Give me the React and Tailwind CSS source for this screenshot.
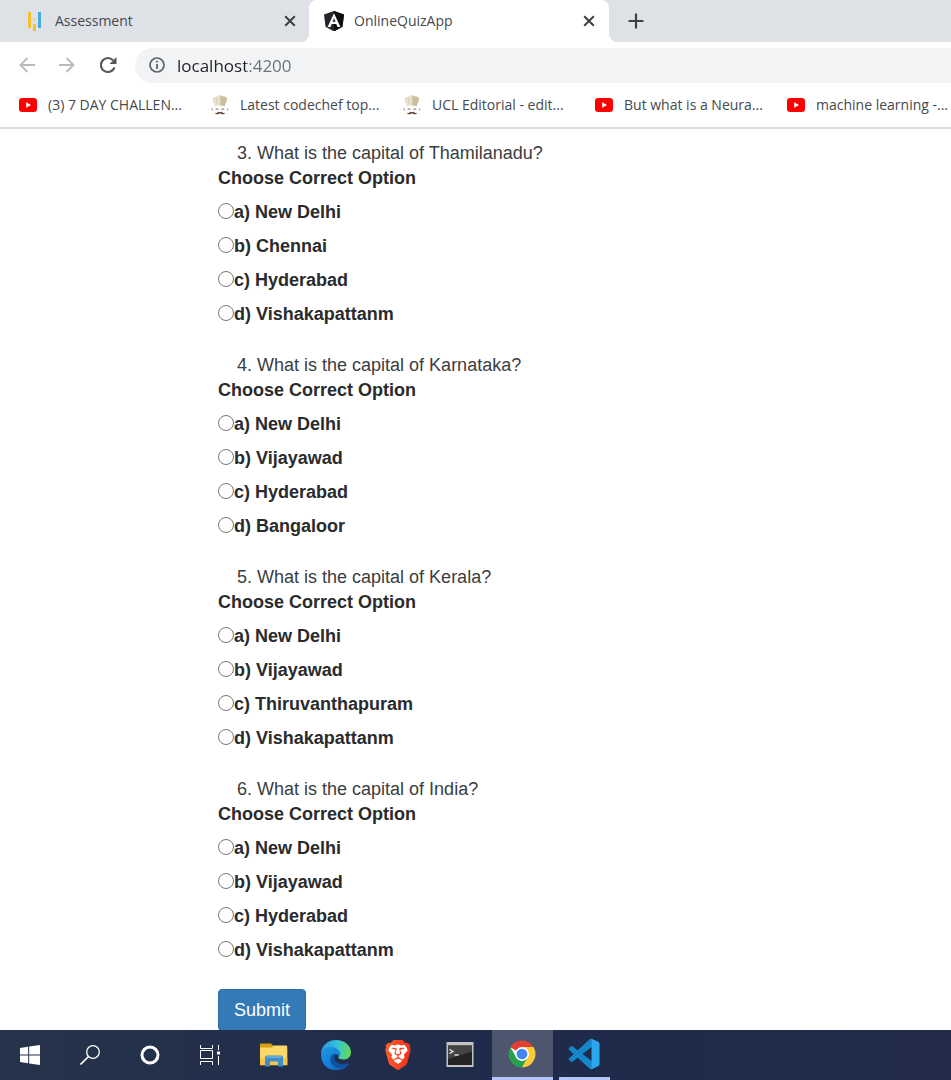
import React from "react";
import { SiBrave } from "react-icons/si";

const questions = [
  { n: 3, text: "What is the capital of Thamilanadu?", options: ["New Delhi", "Chennai", "Hyderabad", "Vishakapattanm"] },
  { n: 4, text: "What is the capital of Karnataka?", options: ["New Delhi", "Vijayawad", "Hyderabad", "Bangaloor"] },
  { n: 5, text: "What is the capital of Kerala?", options: ["New Delhi", "Vijayawad", "Thiruvanthapuram", "Vishakapattanm"] },
  { n: 6, text: "What is the capital of India?", options: ["New Delhi", "Vijayawad", "Hyderabad", "Vishakapattanm"] },
];

const bookmarks = [
  { icon: "youtube", label: "(3) 7 DAY CHALLEN..." },
  { icon: "chef", label: "Latest codechef top..." },
  { icon: "chef", label: "UCL Editorial - edit..." },
  { icon: "youtube", label: "But what is a Neura..." },
  { icon: "youtube", label: "machine learning -..." },
];

const YouTube = () => (
  <svg className="h-5 w-5 shrink-0" viewBox="0 0 20 20">
    <rect x="1" y="3" width="18" height="14" rx="3.2" fill="#f00" />
    <path d="M8.200 7.200v5.600l4.800-2.800z" fill="#fff" />
  </svg>
);

const Chef = () => (
  <svg className="h-5 w-5 shrink-0" viewBox="0 0 20 20" fill="none">
    <path d="M5 11.500C4 8 1.700 5.500 2.500 3.500 3.200 1.700 5.200 2 6 1.800 7.500.2 11 .1 12.800 1.300c2 0 4 .7 4.300 2.200.4 2.500-1.900 4.500-2.300 8-2.800-1.200-7-1.200-9.800 0z" fill="#e9e1d3" />
    <path d="M10 .4c2 0 2.600.6 3 1 2.300 0 4 .7 4.100 2.300.2 2.300-2.100 4.600-2.400 7.600-1.300-.5-2.700-.8-4.200-.8z" fill="#cdbf9f" />
    <path d="M6 3l1.600 7M13.500 3l-1.400 7" stroke="#c9bda4" strokeWidth=".6" />
    <path d="M2.800 13l-1.100 1.300 1.100 1.400M17.200 13l1.100 1.300-1.100 1.400" stroke="#9b8f86" strokeWidth=".9" />
    <path d="M5.700 14.600c.7-1 2-1 2.700 0M11.500 14.600c.7-1 2-1 2.700 0" stroke="#9b9088" strokeWidth="1.100" />
    <path d="M4.800 17.800c1.300 1 2.300 0 3.200-.7.900-.6 1.500-.2 2 .3.500-.5 1.200-.9 2-.3.900.7 2 1.700 3.300.7-.9 2-3.600 2-5.300.5-1.700 1.500-4.400 1.500-5.200-.5z" fill="#5b4638" />
  </svg>
);

const Cross = () => (
  <svg className="h-3 w-3" viewBox="0 0 12 12" stroke="#3c4043" strokeWidth="2">
    <path d="M1.200 1.200l9.600 9.600M10.800 1.200l-9.600 9.600" />
  </svg>
);

const Explorer = () => (
  <svg className="h-8 w-8" viewBox="0 0 32 32">
    <path d="M2 5.500a1 1 0 0 1 1-1h10l2.500 2.500H28a1 1 0 0 1 1 1v4H2z" fill="#d99c15" />
    <path d="M2 8.500h12l1.500-2H28a1.300 1.300 0 0 1 1.300 1.300V26H2z" fill="#fbd869" />
    <path d="M2 19h27.300v7.300H2z" fill="#f8c64b" />
    <path d="M7 27.500V18.500a2 2 0 0 1 2-2h14a2 2 0 0 1 2 2v9h-5v-5h-8v5z" fill="#3f8dc9" />
    <path d="M8.500 18h15" stroke="#64a9d8" strokeWidth="2" />
  </svg>
);

const Edge = () => (
  <svg className="h-8 w-8" viewBox="0 0 32 32">
    <defs>
      <linearGradient id="edgeTop" x1="2" y1="10" x2="31" y2="14" gradientUnits="userSpaceOnUse">
        <stop stopColor="#2a9be0" />
        <stop offset=".5" stopColor="#35c1d6" />
        <stop offset="1" stopColor="#66dc55" />
      </linearGradient>
      <linearGradient id="edgeLeft" x1="2" y1="8" x2="16" y2="31" gradientUnits="userSpaceOnUse">
        <stop stopColor="#2198e3" />
        <stop offset="1" stopColor="#0b73cf" />
      </linearGradient>
    </defs>
    <path d="M1 15C1 7 7.500 1 16 1c8.500 0 15 5.500 15 12.500 0 4.300-3.300 7-7.200 7-3.500 0-5.600-1-5.600-2 0-.8 1.500-1.500 1.500-4C19.700 11.500 16 9 11.500 9 5.500 9 1 13 1 15z" fill="url(#edgeTop)" />
    <path d="M1 16C1 11.500 5.500 8 11 8c5 0 8.700 3 8.700 6.500 0 1.200-.4 2.100-.9 2.700-1-3-6-2.700-7.300 1.300C9.800 24 14 30 19 30.700 9 33 1 25.500 1 16z" fill="url(#edgeLeft)" />
    <path d="M12.500 15.500c-3 2.500-3 9 2 12.500 5 3.500 11 1.500 14.200-3.200.4-.6-.1-1-.7-.7-6.500 3-12 .2-13.300-4-.6-2 0-3.600 1-4.600-1.100-.6-2.300-.4-3.200 0z" fill="#0d51a1" />
    <path d="M10.500 18c-1.500 6 3 12.300 8.500 12.700 4 0 8-2.700 9.700-5.900-4 4.500-10 5.500-14.200 2.500-2.600-1.900-4-5.300-4-9.300z" fill="#1465b8" />
  </svg>
);

const Brave = () => (
  <svg className="h-8 w-8" viewBox="0 0 32 32">
    <defs>
      <linearGradient id="brave" x1="2" x2="22" y1="0" y2="0" gradientUnits="userSpaceOnUse">
        <stop stopColor="#ff5a2a" />
        <stop offset="1" stopColor="#ef3018" />
      </linearGradient>
    </defs>
    <path d="M11 4h10l4 3 1 6-3 9-7 6-7-6-3-9 1-6z" fill="#fff" />
    <SiBrave x="1" y="1" size={30} style={{ fill: "url(#brave)" }} />
  </svg>
);

const Terminal = () => (
  <svg className="h-8 w-8" viewBox="0 0 32 32">
    <rect x="2.500" y="3" width="27" height="25" fill="#c4c4c4" />
    <rect x="4" y="6.500" width="24" height="19.500" fill="#242424" />
    <path d="M4 6.500h24v6L4 20z" fill="#444" />
    <path d="M5.500 10.500l3.500 2-3.500 2" stroke="#f2f2f2" strokeWidth="1.300" fill="none" />
    <path d="M10.500 16h4" stroke="#f2f2f2" strokeWidth="1.300" />
  </svg>
);

const Chrome = () => (
  <svg className="h-7 w-7" viewBox="0 0 48 48">
    <circle cx="24" cy="24" r="22" fill="#fff" />
    <path d="M4.080 12.500A23 23 0 0 1 43.920 12.500H24a11.500 11.500 0 0 0-9.960 5.750z" fill="#e0402f" />
    <path d="M43.920 12.500A23 23 0 0 1 24 47l9.960-17.250A11.500 11.500 0 0 0 24 12.500z" fill="#fdcb35" />
    <path d="M24 47A23 23 0 0 1 4.080 12.500l9.960 17.250A11.500 11.500 0 0 0 33.960 29.750z" fill="#28a04b" />
    <circle cx="24" cy="24" r="11.500" fill="#fff" />
    <circle cx="24" cy="24" r="9.200" fill="#4384f3" />
  </svg>
);

const Code = () => (
  <svg className="h-8 w-8" viewBox="-.5 -.5 25 25">
    <path d="M23.150 2.587L18.210.210a1.494 1.494 0 0 0-1.705.290l-9.460 8.630-4.120-3.128a.999.999 0 0 0-1.276.057L.327 7.261A1 1 0 0 0 .326 8.740L3.899 12 .326 15.260a1 1 0 0 0 .001 1.479L1.650 17.940a.999.999 0 0 0 1.276.057l4.120-3.128 9.460 8.630a1.492 1.492 0 0 0 1.704.290l4.942-2.377A1.500 1.500 0 0 0 24 20.060V3.939a1.500 1.500 0 0 0-.850-1.352zm-5.146 14.861L10.826 12l7.178-5.448v10.896z" fill="#1686ca" />
    <path d="M18.004.130l5.146 2.457A1.500 1.500 0 0 1 24 3.940v16.120a1.500 1.500 0 0 1-.850 1.352l-5.146 2.458z" fill="#2ba5ec" />
  </svg>
);

const system = [
  {
    name: "Start",
    icon: (
      <svg className="h-5 w-5" viewBox="0 0 20 20" fill="#fff">
        <path d="M0 3l8.200-1.200V9.500H0zM9.200 1.600L20 0v9.500H9.200zM0 10.500h8.200v7.700L0 17zM9.200 10.500H20V20L9.200 18.400z" />
      </svg>
    ),
  },
  {
    name: "Search",
    icon: (
      <svg className="h-5 w-5" viewBox="0 0 20 20" fill="none" stroke="#fff" strokeWidth="1.300">
        <circle cx="13" cy="7" r="6.300" />
        <path d="M8.500 11.500L.5 19.500" strokeWidth="1.600" />
      </svg>
    ),
  },
  {
    name: "Cortana",
    icon: (
      <svg className="h-5 w-5" viewBox="0 0 20 20" fill="none">
        <circle cx="10" cy="10" r="8" stroke="#fff" strokeWidth="3" />
      </svg>
    ),
  },
  {
    name: "Task View",
    icon: (
      <svg className="h-5 w-5" viewBox="0 0 20 20" fill="none" stroke="#fff" strokeWidth="1">
        <path d="M.5 0v3.500h12V0M.5 20v-3.500h12V20M.5 5.500h12v8H.5zM18.500 0v5M18.500 11v9" />
        <path d="M17 6.500h3v3h-3z" fill="#fff" stroke="none" />
      </svg>
    ),
  },
];

const apps = [
  { name: "File Explorer", icon: <Explorer /> },
  { name: "Microsoft Edge", icon: <Edge /> },
  { name: "Brave", icon: <Brave /> },
  { name: "Command Prompt", icon: <Terminal /> },
  { name: "Google Chrome", icon: <Chrome />, active: true },
  { name: "Visual Studio Code", icon: <Code />, running: true },
];

function TabStrip() {
  return (
    <div className="flex h-[42px] bg-[linear-gradient(#dee1e6_50%,#fff_50%)] text-sm text-[#45494d]">
      <div className="flex w-[309px] shrink-0 items-center rounded-br-lg bg-[#dee1e6] pr-[13px] pl-[26px]">
        <svg className="h-5 w-[17px]" viewBox="0 0 17 20">
          <path d="M2 1h3v16H2zM7 13h3v7H7z" fill="#f4c22e" />
          <path d="M7 7h3v3H7z" fill="#f7d56d" />
          <path d="M12 1h3v16h-3z" fill="#45a9e6" />
        </svg>
        <span className="ml-3 flex-1">Assessment</span>
        <button aria-label="Close Assessment"><Cross /></button>
      </div>
      <div className="flex w-[300px] shrink-0 items-center rounded-t-lg bg-white pr-[14px] pl-[15px]">
        <svg className="h-5 w-5" viewBox="0 0 20 20">
          <path d="M10 0l10 3.500-1.500 12.200L10 20.400l-8.500-4.700L0 3.500z" fill="#24262b" />
          <path d="M10 0l10 3.500-1.500 12.200L10 20.400z" fill="#0d0f12" />
          <path d="M10 2.300L3.600 16h2.900l1.250-3h4.500l1.250 3h2.900zm0 4.900l1.500 3.600h-3z" fill="#fff" />
        </svg>
        <span className="ml-[10px] flex-1">OnlineQuizApp</span>
        <button aria-label="Close OnlineQuizApp"><Cross /></button>
      </div>
      <div className="flex flex-1 items-center rounded-bl-lg bg-[#dee1e6] pl-[19px]">
        <button aria-label="New tab">
          <svg className="h-4 w-4" viewBox="0 0 16 16" stroke="#3c4043" strokeWidth="2.200">
            <path d="M8 .5v15M.5 8h15" />
          </svg>
        </button>
      </div>
    </div>
  );
}

function Toolbar() {
  return (
    <div className="flex h-[46px] items-center pl-[19px]">
      <button aria-label="Back" className="w-10">
        <svg className="h-4 w-4" viewBox="0 0 16 16" fill="none" stroke="#b8babd" strokeWidth="1.800">
          <path d="M16 8H1.500M8.500 1L1.500 8l7 7" />
        </svg>
      </button>
      <button aria-label="Forward" className="w-10">
        <svg className="h-4 w-4" viewBox="0 0 16 16" fill="none" stroke="#b8babd" strokeWidth="1.800">
          <path d="M0 8h14.500M7.500 1l7 7-7 7" />
        </svg>
      </button>
      <button aria-label="Reload" className="w-9">
        <svg className="h-[18px] w-[18px]" viewBox="0 0 18 18" fill="none">
          <path d="M15.500 11.300A7 7 0 1 1 14 4.200" stroke="#55585c" strokeWidth="2.200" />
          <path d="M17.500 1v7h-7z" fill="#55585c" />
        </svg>
      </button>
      <div className="flex h-[35px] flex-1 items-center rounded-l-full bg-[#f1f3f4] pl-[14px]">
        <svg className="h-4 w-4 shrink-0" viewBox="0 0 16 16" fill="none">
          <circle cx="8" cy="8" r="7" stroke="#5f6368" strokeWidth="1.700" />
          <path d="M8 3.800v1.800M8 7v5" stroke="#5f6368" strokeWidth="1.800" />
        </svg>
        <input
          aria-label="Address"
          defaultValue="localhost:4200"
          className="ml-3 h-7 min-w-0 flex-1 bg-[linear-gradient(90deg,#202124_69px,#6b6f74_69px)] bg-clip-text text-[17px] text-transparent caret-black outline-none"
        />
      </div>
    </div>
  );
}

function Question({ q }) {
  return (
    <fieldset className="mb-[17px]">
      <legend className="pl-[19px]">{q.n}. {q.text}</legend>
      <p className="mb-[9px] font-bold text-[#292b2c]">Choose Correct Option</p>
      {q.options.map((option, i) => (
        <label key={option} className="mb-[9px] flex font-bold text-[#292b2c]">
          <input
            type="radio"
            name={`question-${q.n}`}
            className="mt-[3px] h-4 w-4 shrink-0 appearance-none rounded-full border border-[#767676] bg-white checked:border-4 checked:border-blue-600"
          />
          <span>{"abcd"[i]}) {option}</span>
        </label>
      ))}
    </fieldset>
  );
}

export default function App() {
  return (
    <div className="flex h-screen flex-col overflow-hidden bg-white">
      <header className="shrink-0 overflow-hidden border-b-2 border-[#d9dadb] font-['Open_Sans',sans-serif]">
        <TabStrip />
        <Toolbar />
        <nav className="flex h-[39px] items-center overflow-hidden pb-[5px] pl-[18px] text-sm whitespace-nowrap text-[#45494d]">
          {bookmarks.map((b) => (
            <a key={b.label} href="#" className="flex w-48 shrink-0 items-center gap-[10px]">
              {b.icon === "youtube" ? <YouTube /> : <Chef />}
              <span>{b.label}</span>
            </a>
          ))}
        </nav>
      </header>
      <main className="min-h-0 flex-1 overflow-hidden pt-3 pl-[218px] font-['Liberation_Sans',Arial,sans-serif] text-[18px] leading-[25px] text-[#3b3d3f]">
        <form onSubmit={(e) => e.preventDefault()}>
          {questions.map((q) => <Question key={q.n} q={q} />)}
          <button type="submit" className="h-[42px] rounded border border-[#2e6da4] bg-[#337ab7] px-[15px] text-white">Submit</button>
        </form>
      </main>
      <footer className="flex h-[50px] shrink-0 bg-linear-to-r from-[#26334a] via-[#1f2b4b] to-[#212a49]">
        <div className="mr-[3px] flex">
          {system.map((s) => (
            <button key={s.name} aria-label={s.name} className="flex w-[60px] items-center justify-center">{s.icon}</button>
          ))}
        </div>
        {apps.map((a) => (
          <div key={a.name} className="flex w-[62px] justify-center">
            <button
              aria-label={a.name}
              className={`flex items-center justify-center border-[#b3c6fa] ${a.active ? "w-[61px] border-b-[3px] bg-[#4d566e]" : a.running ? "w-[51px] border-b-[3px]" : "w-full"}`}
            >
              {a.icon}
            </button>
          </div>
        ))}
      </footer>
    </div>
  );
}
